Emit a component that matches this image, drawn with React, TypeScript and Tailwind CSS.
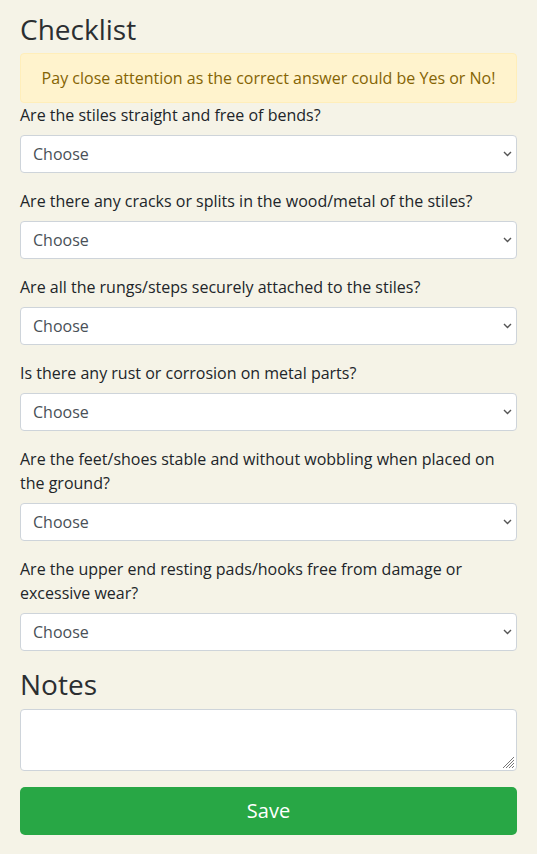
import React from "react";

const questions = [
  "Are the stiles straight and free of bends?",
  "Are there any cracks or splits in the wood/metal of the stiles?",
  "Are all the rungs/steps securely attached to the stiles?",
  "Is there any rust or corrosion on metal parts?",
  "Are the feet/shoes stable and without wobbling when placed on the ground?",
  "Are the upper end resting pads/hooks free from damage or excessive wear?",
];

export default function App() {
  return (
    <div
      className="min-h-[854px] bg-[#f5f3e7] px-5 pt-[13px] pb-[14px] text-[16px] leading-[24px] text-[#212529]"
      style={{ fontFamily: '"Open Sans", "Liberation Sans", sans-serif' }}
    >
      <h3 className="mb-[6px] text-[28px] leading-[1.2] font-normal text-[#2b2e31]">Checklist</h3>
      <div className="rounded-[4px] border border-[#ffeeba] bg-[#fff3cd] px-5 py-3 text-center text-[#856404]">
        Pay close attention as the correct answer could be Yes or No!
      </div>
      {questions.map((q, i) => (
        <div key={i} className="mb-4">
          <label className="mb-2 block">{q}</label>
          <div className="relative">
            <select
              className="block h-[38px] w-full appearance-none rounded-[4px] border border-[#ced4da] bg-white px-3 text-[16px] text-[#495057]"
              defaultValue=""
            >
              <option value="">Choose</option>
              <option value="yes">Yes</option>
              <option value="no">No</option>
            </select>
            <svg
              className="pointer-events-none absolute right-[5px] top-[16px]"
              width="9"
              height="6"
              viewBox="0 0 9 6"
              fill="none"
            >
              <path d="M1 1l3.5 3.5L8 1" stroke="#555" strokeWidth="1.4" />
            </svg>
          </div>
        </div>
      ))}
      <h3 className="mb-2 pt-[1px] text-[28px] leading-[1.2] font-normal text-[#2b2e31]">Notes</h3>
      <div className="relative mb-4">
        <textarea
          rows={2}
          className="block h-[62px] w-full resize-none rounded-[4px] border border-[#ced4da] bg-white px-3 py-[6px] text-[16px] text-[#495057]"
        />
        <svg
          className="pointer-events-none absolute bottom-[2px] right-[2px]"
          width="14"
          height="14"
          viewBox="0 0 14 14"
        >
          <path d="M13 2L2 13M13 5L5 13M13 8L8 13M13 11L11 13" stroke="#777" strokeWidth="1" />
        </svg>
      </div>
      <button className="block h-[48px] w-full rounded-[5px] bg-[#28a745] text-[20px] text-white">
        Save
      </button>
    </div>
  );
}
